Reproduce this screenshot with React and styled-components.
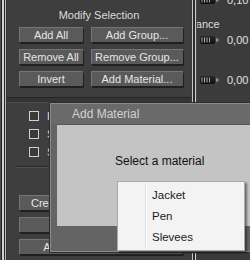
import React from "react";
import styled, { createGlobalStyle } from "styled-components";

const Global = createGlobalStyle`
  html, body { margin: 0; padding: 0; background: #3d3d3d; }
  body { width: 250px; height: 260px; overflow: hidden; font-family: "Liberation Sans", Arial, sans-serif; }
  * { box-sizing: border-box; }
`;

const Screen = styled.div`
  position: relative;
  width: 250px;
  height: 260px;
  overflow: hidden;
  display: flex;
  background: #3d3d3d;
`;

const EdgeStrip = styled.div`
  flex: 0 0 7px;
  background: linear-gradient(
    to right,
    #4d4d4d 0 1px,
    #1f1f1f 1px 2px,
    #d6cfcf 2px 4px,
    #2b2b2b 4px 5px,
    #b9b9b9 5px 6px,
    #353535 6px 7px
  );
`;

const Panel = styled.div`
  flex: 0 0 184px;
  display: flex;
  flex-direction: column;
  background: #3e3e3e;
`;

const Section = styled.div`
  display: flex;
  flex-direction: column;
  padding: ${(p) => p.$pad};
`;

const SectionTitle = styled.div`
  color: #dcdcdc;
  font-size: 11px;
  line-height: 13px;
  text-align: center;
`;

const ButtonGrid = styled.div`
  display: grid;
  grid-template-columns: ${(p) => p.$cols};
  column-gap: 8px;
  row-gap: 7px;
  margin: ${(p) => p.$margin};
`;

const Btn = styled.div`
  height: 15px;
  display: flex;
  align-items: center;
  justify-content: center;
  white-space: nowrap;
  overflow: hidden;
  background: #5a5a5a;
  color: #e6e6e6;
  font-size: 11px;
  border-radius: 1px;
  box-shadow: inset 1px 1px 0 #767676, 1px 2px 0 #202020;
`;

const GroupBreak = styled.div`
  height: 6px;
  background: #343434;
  border-top: 1px solid #262626;
  border-bottom: 1px solid #4a4a4a;
`;

const CheckList = styled.div`
  display: flex;
  flex-direction: column;
  gap: 8px;
  padding-left: 22px;
`;

const CheckRow = styled.div`
  display: flex;
  align-items: center;
  gap: 8px;
  height: 10px;
  color: #dddddd;
  font-size: 11px;
`;

const Box = styled.div`
  width: 10px;
  height: 10px;
  border: 1px solid #d0d0d0;
  background: #3a3a3a;
`;

const Rule = styled.div`
  height: 2px;
  margin: 9px 0 0 8px;
  border-top: 1px solid #262626;
  border-bottom: 1px solid #505050;
`;

const Divider = styled.div`
  flex: 0 0 6px;
  background: linear-gradient(
    to right,
    #3a3a3a 0 1px,
    #c4c4c4 1px 2px,
    #2a2a2a 2px 4px,
    #cfcfcf 4px 5px,
    #444444 5px 6px
  );
`;

const RightPanel = styled.div`
  flex: 1 1 auto;
  background: #3b3b3b;
  overflow: hidden;
  display: flex;
  flex-direction: column;
  margin-top: 0;
`;

const Scroller = styled.div`
  display: flex;
  flex-direction: column;
  margin-top: -7px;
`;

const SliderRow = styled.div`
  display: flex;
  align-items: center;
  height: 13px;
  margin-top: ${(p) => p.$top}px;
  padding-left: 3px;
  gap: 7px;
  color: #e0e0e0;
  font-size: 11px;
  white-space: nowrap;
`;

const ParamLabel = styled.div`
  height: 13px;
  line-height: 13px;
  margin-top: ${(p) => p.$top}px;
  margin-left: -25px;
  color: #dcdcdc;
  font-size: 11px;
  white-space: nowrap;
`;

const Handle = () => (
  <svg width="20" height="8" viewBox="0 0 20 8">
    <defs>
      <linearGradient id="hg" x1="0" y1="0" x2="0" y2="1">
        <stop offset="0" stopColor="#2a2a2a" />
        <stop offset="1" stopColor="#0e0e0e" />
      </linearGradient>
    </defs>
    <rect x="0" y="0" width="15" height="8" rx="2" fill="url(#hg)" />
    <rect x="1.5" y="1.5" width="1" height="5" fill="#9a9a9a" />
    <rect x="4" y="1.5" width="1" height="5" fill="#b0b0b0" />
    <rect x="6.5" y="1.5" width="1" height="5" fill="#b0b0b0" />
    <rect x="9" y="1.5" width="1" height="5" fill="#9a9a9a" />
    <path d="M16 1.5 L19.5 4 L16 6.5 Z" fill="#8a8a8a" />
  </svg>
);

const Dialog = styled.div`
  position: absolute;
  left: 50px;
  top: 103px;
  width: 215px;
  height: 149px;
  display: flex;
  flex-direction: column;
  background: #646464;
  border: 1px solid #8a8a8a;
  box-shadow: 0 0 0 1px #2e2e2e;
`;

const TitleBar = styled.div`
  height: 20px;
  display: flex;
  align-items: center;
  padding-left: 21px;
  background: #6a6a6a;
  color: #d2d2d2;
  font-size: 12px;
`;

const DialogBody = styled.div`
  flex: 1;
  padding: 0 0 25px 6px;
  display: flex;
  flex-direction: column;
`;

const Client = styled.div`
  flex: 1;
  background: #c4c4c4;
  border-top: 1px solid #585858;
  padding: 29px 0 0 58px;
  color: #111;
  font-size: 12px;
  line-height: 14px;
`;

const Menu = styled.div`
  position: absolute;
  left: 117px;
  top: 181px;
  width: 128px;
  height: 70px;
  padding: 3px 2px;
  display: flex;
  flex-direction: column;
  border: 1px solid #a9a9a9;
  background:
    linear-gradient(to right, transparent 27px, #e2e3e3 27px 28px, #ffffff 28px 29px, transparent 29px),
    #f3f3f3;
  box-shadow: 2px 2px 2px rgba(0, 0, 0, 0.45);
`;

const MenuItem = styled.div`
  height: 22px;
  display: flex;
  align-items: center;
  padding-left: 32px;
  color: #1a1a1a;
  font-size: 11.5px;
`;

export default function App() {
  return (
    <>
      <Global />
      <Screen>
        <EdgeStrip />
        <Panel>
          <Section $pad="9px 0 11px 0">
            <SectionTitle>Modify Selection</SectionTitle>
            <ButtonGrid $cols="64px 92px" $margin="5px 0 0 12px">
              <Btn>Add All</Btn>
              <Btn>Add Group...</Btn>
              <Btn>Remove All</Btn>
              <Btn>Remove Group...</Btn>
              <Btn>Invert</Btn>
              <Btn>Add Material...</Btn>
            </ButtonGrid>
          </Section>
          <GroupBreak />
          <Section $pad="8px 0 0 0">
            <CheckList>
              <CheckRow><Box />Hide</CheckRow>
              <CheckRow><Box />Show</CheckRow>
              <CheckRow><Box />Select</CheckRow>
            </CheckList>
            <Rule />
            <ButtonGrid $cols="164px" $margin="27px 0 0 12px">
              <Btn>Create Group from Selection</Btn>
              <Btn>Delete</Btn>
              <Btn>Apply Material to Group</Btn>
            </ButtonGrid>
          </Section>
        </Panel>
        <Divider />
        <RightPanel>
          <Scroller>
            <SliderRow $top={0}><Handle />0,10</SliderRow>
            <ParamLabel $top={12}>Tolerance</ParamLabel>
            <SliderRow $top={2}><Handle />0,00</SliderRow>
            <SliderRow $top={27}><Handle />0,00</SliderRow>
          </Scroller>
        </RightPanel>

        <Dialog>
          <TitleBar>Add Material</TitleBar>
          <DialogBody>
            <Client>Select a material</Client>
          </DialogBody>
        </Dialog>

        <Menu>
          <MenuItem>Jacket</MenuItem>
          <MenuItem>Pen</MenuItem>
          <MenuItem>Slevees</MenuItem>
        </Menu>
      </Screen>
    </>
  );
}
